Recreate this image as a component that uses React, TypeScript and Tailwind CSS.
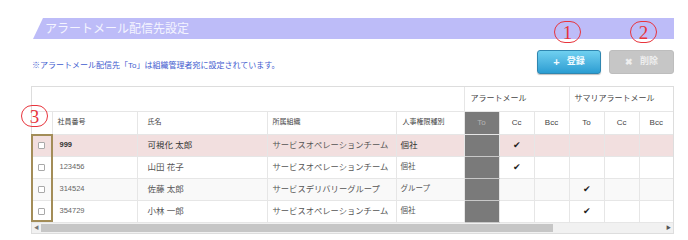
import React from "react";

type Row = {
  no: string;
  name: string;
  org: string;
  role: string;
  checks: [boolean, boolean, boolean, boolean, boolean];
  bg: string;
  strong?: boolean;
};

const rows: Row[] = [
  { no: "999", name: "可視化 太郎", org: "サービスオペレーションチーム", role: "個社", checks: [true, false, false, false, false], bg: "bg-[#f2dfdf]", strong: true },
  { no: "123456", name: "山田 花子", org: "サービスオペレーションチーム", role: "個社", checks: [true, false, false, false, false], bg: "bg-white" },
  { no: "314524", name: "佐藤 太郎", org: "サービスデリバリーグループ", role: "グループ", checks: [false, false, true, false, false], bg: "bg-[#f9f9f9]" },
  { no: "354729", name: "小林 一郎", org: "サービスオペレーションチーム", role: "個社", checks: [false, false, true, false, false], bg: "bg-white" },
];

function Marker({ n, className }: { n: string; className: string }) {
  return (
    <div
      className={`absolute flex h-[22px] w-[27px] items-center justify-center rounded-full border border-[#e8343c] text-[19px] leading-none text-[#e8343c] ${className}`}
      style={{ fontFamily: '"Liberation Serif", serif' }}
    >
      {n}
    </div>
  );
}

export default function App() {
  const cell = "border-r border-b border-[#e6e6e6]";
  return (
    <div
      className="relative h-[238px] w-[688px] bg-white"
      style={{ fontFamily: '"Liberation Sans", "Noto Sans CJK JP", sans-serif' }}
    >
      <div className="ml-[33px] w-[641px] pt-[18px]">
        <div className="flex h-[21px] items-center bg-[#bdbcf8] pl-[12px] text-[12px] text-[#f4f4ff] [clip-path:polygon(10px_0,100%_0,100%_100%,0_100%)]">
          アラートメール配信先設定
        </div>
      </div>

      <div className="ml-[31px] w-[643px]">
        <div className="mt-[11px] flex items-end justify-between">
          <p className="pb-[2px] pl-[1px] text-[8px] leading-[12px] text-[#3f5ccf]">
            ※アラートメール配信先「To」は組織管理者宛に設定されています。
          </p>
          <div className="flex gap-[8px]">
            <button className="flex h-[24px] w-[64px] items-center justify-center gap-[7px] rounded-[3px] border border-[#2f86b0] bg-gradient-to-b from-[#6fd0f0] to-[#2a9dd2] text-[9px] font-bold text-[#f2fbff] shadow-[0_1px_1px_rgba(0,0,0,0.25)]">
              <span className="text-[11px] leading-none">+</span>
              <span>登録</span>
            </button>
            <button className="flex h-[24px] w-[65px] items-center justify-center gap-[7px] rounded-[3px] border border-[#bdbdbd] bg-[#c6c6c6] text-[9px] font-bold text-[#eeeeee]">
              <span className="text-[9px] leading-none">✖</span>
              <span>削除</span>
            </button>
          </div>
        </div>

        <div className="mt-[12px] border border-[#dddddd] bg-white">
          <table className="w-[641px] table-fixed border-collapse text-[#555]">
            <colgroup>
              <col className="w-[20px]" />
              <col className="w-[85px]" />
              <col className="w-[130px]" />
              <col className="w-[129px]" />
              <col className="w-[68px]" />
              <col className="w-[35px]" />
              <col className="w-[35px]" />
              <col className="w-[35px]" />
              <col className="w-[35px]" />
              <col className="w-[35px]" />
              <col className="w-[34px]" />
            </colgroup>
            <thead>
              <tr className="h-[24px]">
                <th colSpan={5} className={cell}></th>
                <th colSpan={3} className={`${cell} pl-[6px] text-left text-[8px] font-normal text-[#444]`}>
                  アラートメール
                </th>
                <th colSpan={3} className="border-b border-[#e6e6e6] pl-[5px] text-left text-[8px] font-normal text-[#444]">
                  サマリアラートメール
                </th>
              </tr>
              <tr className="h-[23px] text-[7px] font-normal text-[#444]">
                <th className={cell}></th>
                <th className={`${cell} pl-[5px] text-left font-normal`}>社員番号</th>
                <th className={`${cell} pl-[10px] text-left font-normal`}>氏名</th>
                <th className={`${cell} pl-[5px] text-left font-normal`}>所属組織</th>
                <th className={`${cell} pl-[6px] text-left font-normal`}>人事権限種別</th>
                <th className="border-r border-b border-[#e6e6e6] bg-[#7a7a7a] text-[8px] font-normal text-[#b5b5b5]">To</th>
                <th className={`${cell} text-[8px] font-normal`}>Cc</th>
                <th className={`${cell} text-[8px] font-normal`}>Bcc</th>
                <th className={`${cell} text-[8px] font-normal`}>To</th>
                <th className={`${cell} text-[8px] font-normal`}>Cc</th>
                <th className="border-b border-[#e6e6e6] text-[8px] font-normal">Bcc</th>
              </tr>
            </thead>
            <tbody>
              {rows.map((r) => (
                <tr key={r.no} className={`h-[22px] ${r.bg}`}>
                  <td className={cell}>
                    <div className="mx-auto h-[7px] w-[7px] rounded-[1px] border border-[#a9a9a9] bg-white" />
                  </td>
                  <td className={`${cell} pl-[7px] text-[7.5px] ${r.strong ? "font-bold text-[#333]" : "text-[#666]"}`}>{r.no}</td>
                  <td className={`${cell} pl-[10px] text-[8.5px] ${r.strong ? "text-[#333]" : ""}`}>{r.name}</td>
                  <td className={`${cell} pl-[5px] text-[8.3px]`}>{r.org}</td>
                  <td className={`${cell} pl-[4px] ${r.strong ? "text-[8.5px] text-[#333]" : "text-[7.5px]"}`}>{r.role}</td>
                  <td className="border-r border-b border-r-[#e6e6e6] border-b-[#c8c8c8] bg-[#7a7a7a]"></td>
                  {r.checks.map((c, i) => (
                    <td key={i} className={`${i === 4 ? "border-b border-[#e6e6e6]" : cell} text-center text-[9px] leading-none text-[#222]`}>
                      {c ? "✔" : ""}
                    </td>
                  ))}
                </tr>
              ))}
            </tbody>
          </table>
          <div className="flex h-[10px] items-center bg-[#f1f1f1]">
            <span className="w-[9px] text-center text-[5px] text-[#777]">◀</span>
            <div className="h-[8px] w-[512px] bg-[#c6c6c6]" />
            <div className="flex-1" />
            <span className="w-[9px] text-center text-[5px] text-[#555]">▶</span>
          </div>
        </div>
      </div>

      <Marker n="1" className="left-[554px] top-[21px]" />
      <Marker n="2" className="left-[630px] top-[21px]" />
      <Marker n="3" className="left-[21px] top-[105px]" />
      <div className="absolute left-[31px] top-[134px] h-[88px] w-[22px] border-2 border-[#a38d58]" />
    </div>
  );
}
